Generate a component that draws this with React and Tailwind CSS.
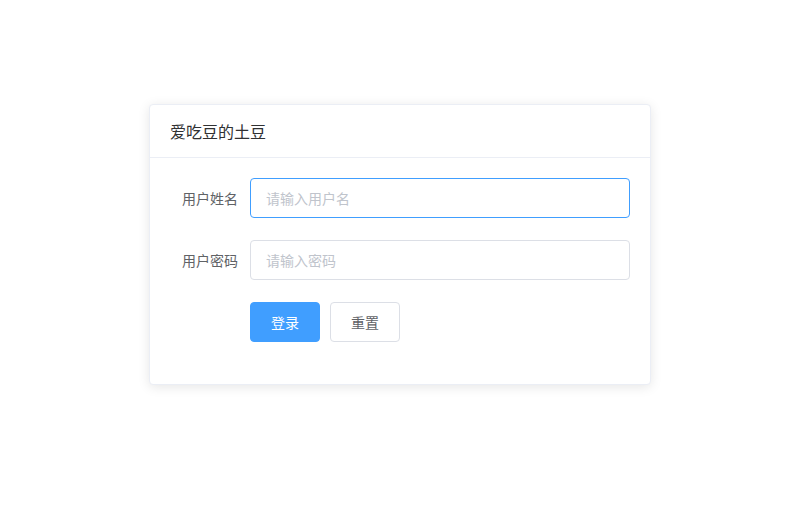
import React, { useState } from "react";

// 登录卡片
export default function App() {
  const [form, setForm] = useState({ username: "", password: "" });

  const handleReset = () => setForm({ username: "", password: "" });

  return (
    <div
      className="min-h-[514px] bg-white pt-[104px] pl-[149px]"
      style={{ fontFamily: '"Noto Sans CJK SC", "Noto Sans", sans-serif' }}
    >
      <div className="w-[502px] rounded-[4px] border border-[#EBEEF5] bg-white shadow-[0_2px_12px_0_rgba(0,0,0,0.1)]">
        <div className="flex h-[53px] items-center border-b border-[#EBEEF5] px-5 text-[16px] text-[#303133]">
          爱吃豆的土豆
        </div>
        <div className="flex flex-col gap-[22px] px-5 pt-5 pb-[42px]">
          <div className="flex items-center">
            <label className="w-20 pr-3 text-right text-[14px] text-[#606266]">
              用户姓名
            </label>
            <input
              type="text"
              autoFocus
              value={form.username}
              onChange={(e) => setForm({ ...form, username: e.target.value })}
              placeholder="请输入用户名"
              className="h-10 flex-1 rounded-[4px] border border-[#409EFF] px-[15px] text-[14px] text-[#606266] caret-[#606266] outline-none placeholder:text-[#C0C4CC]"
            />
          </div>
          <div className="flex items-center">
            <label className="w-20 pr-3 text-right text-[14px] text-[#606266]">
              用户密码
            </label>
            <input
              type="password"
              value={form.password}
              onChange={(e) => setForm({ ...form, password: e.target.value })}
              placeholder="请输入密码"
              className="h-10 flex-1 rounded-[4px] border border-[#DCDFE6] px-[15px] text-[14px] text-[#606266] outline-none placeholder:text-[#C0C4CC] focus:border-[#409EFF]"
            />
          </div>
          <div className="flex items-center gap-[10px] pl-20">
            <button
              type="button"
              className="h-10 rounded-[4px] border border-[#409EFF] bg-[#409EFF] px-5 text-[14px] leading-none text-white"
            >
              登录
            </button>
            <button
              type="button"
              onClick={handleReset}
              className="h-10 rounded-[4px] border border-[#DCDFE6] bg-white px-5 text-[14px] leading-none text-[#606266]"
            >
              重置
            </button>
          </div>
        </div>
      </div>
    </div>
  );
}
